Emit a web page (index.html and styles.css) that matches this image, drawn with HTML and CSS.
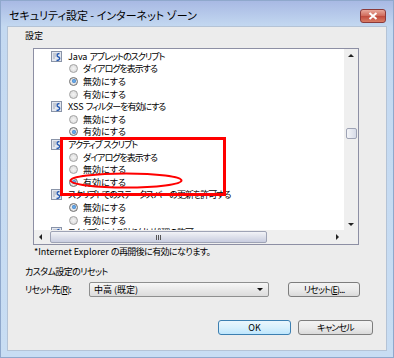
FILE: index.html
```html
<!DOCTYPE html>
<html lang="ja">

<head>
    <meta charset="UTF-8">
    <title>セキュリティ設定 - インターネット ゾーン</title>
    <link rel="stylesheet" href="styles.css">
</head>

<body>
    <svg class="defs" width="0" height="0">
        <symbol id="setting-icon" viewBox="0 0 11 11">
            <rect x="0.5" y="0.5" width="10" height="10" fill="#e4e8f0" stroke="#8a94a8" />
            <path d="M2 3h4M2 5h3M2 7h2" stroke="#a3a9b6" />
            <path d="M8.5 2.5c-3 0-3 3-1 3.5s1.5 3.5-2 3.5" fill="none" stroke="#2559b0" stroke-width="1.4" />
        </symbol>
    </svg>

    <div class="window">
        <div class="titlebar">
            <span class="title">セキュリティ設定 - インターネット ゾーン</span>
            <span class="close">
                <svg width="10" height="8" viewBox="0 0 10 8">
                    <path d="M1.5 1l7 6M8.5 1l-7 6" stroke="#fff" stroke-width="2" />
                </svg>
            </span>
        </div>

        <div class="client">
            <div class="group-label">設定</div>

            <!-- settings list -->
            <div class="listbox">
                <div class="list-main">
                    <div class="list-content">
                        <div class="row cat"><svg class="icon"><use href="#setting-icon" /></svg>Java <span class="kana">アプレットのスクリプト</span></div>
                        <div class="row opt tight"><span class="radio"></span>ダイアログを表示する</div>
                        <div class="row opt"><span class="radio on"></span>無効にする</div>
                        <div class="row opt"><span class="radio"></span>有効にする</div>
                        <div class="row cat"><svg class="icon"><use href="#setting-icon" /></svg>XSS <span class="kana">フィルターを有効にする</span></div>
                        <div class="row opt"><span class="radio"></span>無効にする</div>
                        <div class="row opt"><span class="radio on"></span>有効にする</div>
                        <div class="row cat tight"><svg class="icon"><use href="#setting-icon" /></svg>アクティブ&nbsp; スクリプト</div>
                        <div class="row opt tight"><span class="radio"></span>ダイアログを表示する</div>
                        <div class="row opt"><span class="radio"></span>無効にする</div>
                        <div class="row opt"><span class="radio on"></span>有効にする</div>
                        <div class="row cat tight"><svg class="icon"><use href="#setting-icon" /></svg>スクリプトでのステータス バーの更新を許可する</div>
                        <div class="row opt"><span class="radio on"></span>無効にする</div>
                        <div class="row opt"><span class="radio"></span>有効にする</div>
                        <div class="row cat tight"><svg class="icon"><use href="#setting-icon" /></svg>スクリプトによる貼り付け処理の許可</div>

                        <!-- red annotation -->
                        <div class="mark-box"></div>
                        <svg class="mark-ellipse" width="114" height="17" viewBox="0 0 114 17">
                            <ellipse cx="57" cy="8.5" rx="55.5" ry="7" fill="none" stroke="#f00" stroke-width="2" />
                        </svg>
                    </div>
                    <div class="vscroll">
                        <span class="arrow up"></span>
                        <span class="vthumb"></span>
                        <span class="arrow down"></span>
                    </div>
                </div>
                <div class="hscroll-row">
                    <div class="hscroll">
                        <span class="arrow left"></span>
                        <span class="hthumb"><span class="grip"></span></span>
                        <span class="arrow right"></span>
                    </div>
                    <div class="corner"></div>
                </div>
            </div>

            <p class="note">*Internet Explorer <span class="note-jp">の再開後に有効になります。</span></p>

            <div class="reset-title">カスタム設定のリセット</div>
            <div class="reset-row">
                <span class="reset-label">リセット先(<u>R</u>):</span>
                <div class="select">中高 (既定)<span class="caret"></span></div>
                <span class="btn reset-btn">リセット(<u>E</u>)...</span>
            </div>

            <div class="footer">
                <span class="btn ok">OK</span>
                <span class="btn cancel">キャンセル</span>
            </div>
        </div>
    </div>
</body>

</html>
```

FILE: styles.css
```css
/* Page */
body {
    margin: 0;
    font-family: "Noto Sans CJK JP", "Noto Sans", sans-serif;
    font-feature-settings: "palt";
    font-size: 9px;
    color: #000;
}

.defs {
    position: absolute;
}

/* Window frame */
.window {
    width: 394px;
    height: 358px;
    box-sizing: border-box;
    padding: 0 6px 6px 6px;
    border: 1px solid #8fa8cc;
    background: linear-gradient(#a8b9e4 0, #c4d9f1 26px, #c8ddf3 100%);
    display: flex;
    flex-direction: column;
}

.titlebar {
    height: 25px;
    display: flex;
    align-items: center;
    justify-content: space-between;
    flex-shrink: 0;
}

.title {
    font-size: 11px;
    margin-left: 2px;
    padding-top: 2px;
    color: #000;
}

.close {
    width: 26px;
    height: 14px;
    margin-top: 4px;
    margin-right: 1px;
    box-sizing: border-box;
    border: 1px solid #8b3a3a;
    border-radius: 3px;
    background: linear-gradient(#e9a99c, #cf6a5a 50%, #c04a3c 51%, #d97c66);
    display: flex;
    align-items: center;
    justify-content: center;
}

/* Client area */
.client {
    flex: 1;
    background: #ececec;
    border: 1px solid #b4c3d6;
    display: flex;
    flex-direction: column;
}

.group-label {
    line-height: 12px;
    margin: 3px 0 0 17px;
}

/* List box */
.listbox {
    width: 326px;
    height: 197px;
    margin: 6px 0 0 25px;
    box-sizing: border-box;
    border: 1px solid #8d8fa4;
    background: #fff;
    display: flex;
    flex-direction: column;
}

.list-main {
    flex: 1;
    display: flex;
    min-height: 0;
}

.list-content {
    position: relative;
    flex: 1;
    overflow: hidden;
    padding-top: 1px;
}

.row {
    height: 12.6px;
    display: flex;
    align-items: center;
    white-space: pre;
}

/* katakana in the original UI font is much narrower */
.row.tight,
.kana {
    letter-spacing: -1px;
}

.row.cat {
    padding-left: 17px;
}

.row.opt {
    padding-left: 35px;
}

.icon {
    width: 11px;
    height: 11px;
    margin-right: 6px;
    flex-shrink: 0;
}

.radio {
    width: 9px;
    height: 9px;
    box-sizing: border-box;
    border: 1px solid #a2a2a2;
    border-radius: 50%;
    background: radial-gradient(#f4f4f4, #d6d6d6);
    margin-right: 5px;
    flex-shrink: 0;
    display: flex;
    align-items: center;
    justify-content: center;
}

.radio.on {
    border-color: #6f6f6f;
}

.radio.on::after {
    content: "";
    width: 4px;
    height: 4px;
    border-radius: 50%;
    background: radial-gradient(#7cc0f4, #1b5db4);
}

/* Red annotation drawn on the screenshot */
.mark-box {
    position: absolute;
    left: 26px;
    top: 88px;
    width: 166px;
    height: 59px;
    box-sizing: border-box;
    border: 3px solid #f00;
}

.mark-ellipse {
    position: absolute;
    left: 35px;
    top: 123px;
}

/* Scroll bars */
.vscroll {
    width: 14px;
    background: #efefef;
    display: flex;
    flex-direction: column;
    align-items: center;
}

.vthumb {
    width: 11px;
    height: 11px;
    margin-top: 71px;
    box-sizing: border-box;
    border: 1px solid #9ea3b5;
    border-radius: 2px;
    background: linear-gradient(90deg, #f4f5f8, #d7dbe8);
}

.arrow {
    width: 0;
    height: 0;
    border: 3px solid transparent;
}

.arrow.up {
    margin-top: 5px;
    border-bottom-color: #222;
    border-top-width: 0;
}

.arrow.down {
    margin-top: auto;
    margin-bottom: 4px;
    border-top-color: #222;
    border-bottom-width: 0;
}

.hscroll-row {
    height: 14px;
    display: flex;
}

.hscroll {
    flex: 1;
    background: #efefef;
    display: flex;
    align-items: center;
}

.arrow.left {
    margin-left: 5px;
    border-right-color: #222;
    border-left-width: 0;
}

.arrow.right {
    margin-left: auto;
    margin-right: 5px;
    border-left-color: #222;
    border-right-width: 0;
}

.hthumb {
    width: 217px;
    height: 12px;
    margin-left: 8px;
    box-sizing: border-box;
    border: 1px solid #9ea3b5;
    border-radius: 2px;
    background: linear-gradient(#f2f3f7, #dde0ea 50%, #c9cde0);
    display: flex;
    align-items: center;
    justify-content: center;
}

.grip {
    width: 5px;
    height: 5px;
    background: repeating-linear-gradient(90deg, #555 0 1px, transparent 1px 2px);
}

.corner {
    width: 14px;
    background: #efefef;
}

/* Lower part */
.note {
    margin: 1px 0 0 26px;
    line-height: 12px;
}

.note-jp {
    letter-spacing: -0.6px;
}

.reset-title {
    margin: 8px 0 0 17px;
    line-height: 12px;
    letter-spacing: -0.6px;
}

.reset-row {
    display: flex;
    align-items: center;
    height: 15px;
    margin: 4px 0 0 17px;
}

.reset-label {
    width: 64px;
    letter-spacing: -0.8px;
}

.select {
    position: relative;
    width: 180px;
    height: 15px;
    box-sizing: border-box;
    padding-left: 4px;
    line-height: 13px;
    border: 1px solid #8e8f8f;
    border-radius: 2px;
    background: linear-gradient(#f7f7f7, #e9e9e9 50%, #dcdcdc);
}

.caret {
    position: absolute;
    right: 5px;
    top: 5px;
    border: 3px solid transparent;
    border-top: 3px solid #111;
    border-bottom-width: 0;
}

.btn {
    height: 15px;
    box-sizing: border-box;
    border: 1px solid #7d7d7d;
    border-radius: 3px;
    background: linear-gradient(#f3f3f3, #ebebeb 50%, #dadada);
    display: flex;
    align-items: center;
    justify-content: center;
}

.reset-btn {
    width: 72px;
    margin-left: 19px;
    letter-spacing: -0.8px;
}

.footer {
    display: flex;
    justify-content: flex-end;
    gap: 7px;
    margin-top: 23px;
    padding-right: 13px;
}

.ok {
    width: 73px;
    border-color: #3c7fb1;
    background: linear-gradient(#eaf6fd, #d9f0fc 50%, #bee6fd);
}

.cancel {
    width: 75px;
    letter-spacing: -0.8px;
}
```
